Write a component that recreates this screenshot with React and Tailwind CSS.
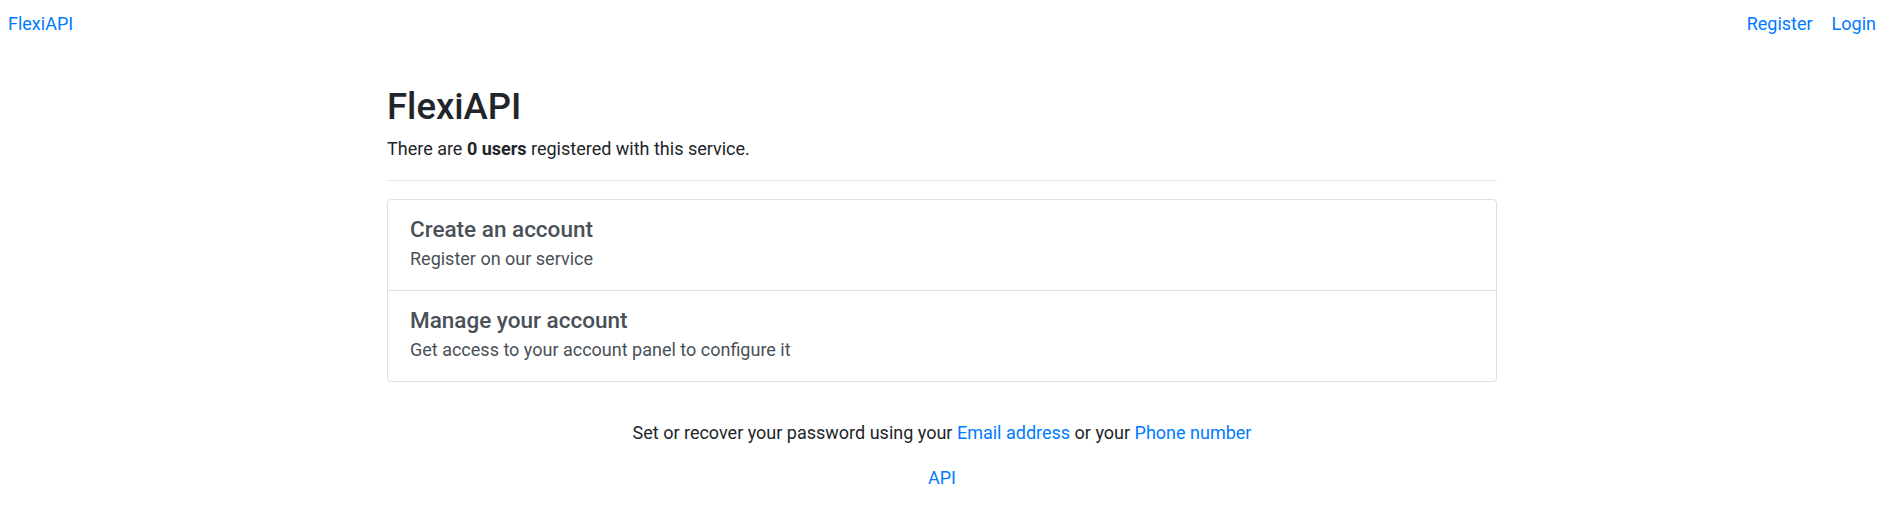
import React from "react";

const font = { fontFamily: "Roboto, 'Liberation Sans', sans-serif" };

const items = [
  { title: "Create an account", text: "Register on our service" },
  { title: "Manage your account", text: "Get access to your account panel to configure it" },
];

export default function App() {
  return (
    <div className="min-h-screen bg-white text-[18px] leading-[27px] text-[#212529]" style={font}>
      <div className="mr-[11px]">
        {/* Top bar */}
        <nav className="flex items-center justify-between pl-2 pr-[8px] pt-[10px]">
          <a href="#" className="text-[#007bff]">FlexiAPI</a>
          <div className="flex items-center gap-[19px]">
            <a href="#" className="text-[#007bff]">Register</a>
            <a href="#" className="text-[#007bff]">Login</a>
          </div>
        </nav>

        {/* Main content */}
        <main className="mx-auto max-w-[1140px] px-[15px]">
          <h1 className="mt-[48px] mb-[6px] text-[36.5px] font-medium leading-[44px]">FlexiAPI</h1>
          <p>
            There are <b className="font-bold">0 users</b> registered with this service.
          </p>
          <hr className="mt-[18px] border-t border-[#e6e6e6]" />

          <div className="mt-[18px] rounded-[4px] border border-[#dfdfdf]">
            {items.map((item, i) => (
              <a
                key={item.title}
                href="#"
                className={`block px-[22px] pt-[16px] pb-[18px] text-[#495057] ${i > 0 ? "border-t border-[#dfdfdf]" : ""}`}
              >
                <h5 className="mb-[2px] text-[22.5px] font-medium leading-[27px]">{item.title}</h5>
                <p>{item.text}</p>
              </a>
            ))}
          </div>

          <p className="mt-[37px] text-center">
            Set or recover your password using your{" "}
            <a href="#" className="text-[#007bff]">Email address</a> or your{" "}
            <a href="#" className="text-[#007bff]">Phone number</a>
          </p>
          <p className="mt-[18px] text-center">
            <a href="#" className="text-[#007bff]">API</a>
          </p>
        </main>
      </div>
    </div>
  );
}
